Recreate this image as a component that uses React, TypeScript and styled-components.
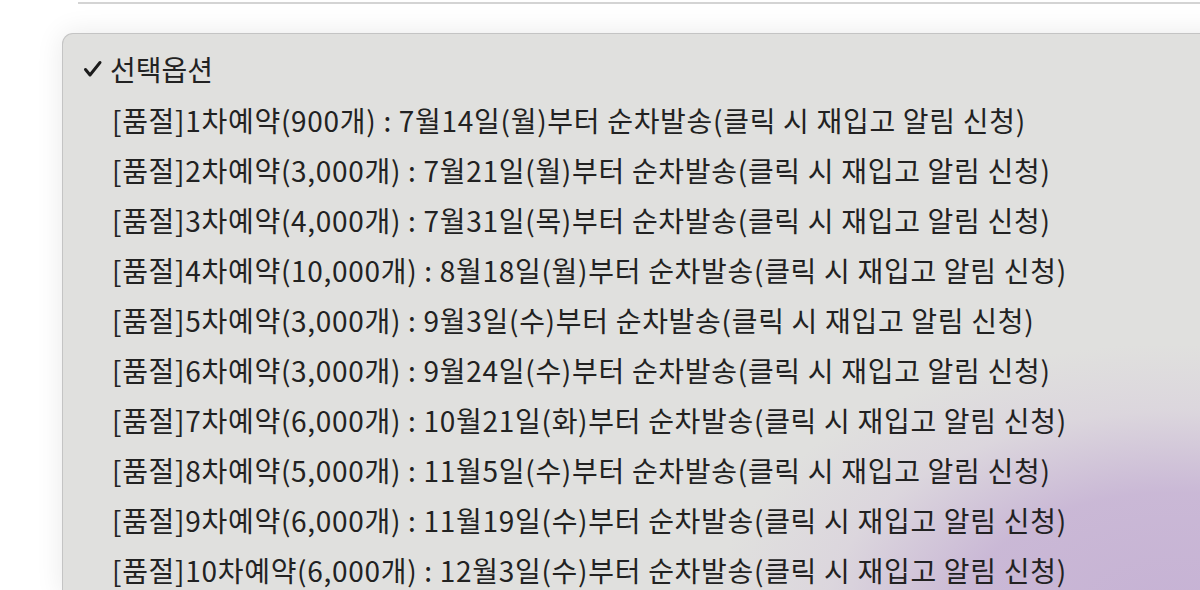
import React from 'react';
import styled, { createGlobalStyle } from 'styled-components';

interface Option {
    round: number,
    qty: string,
    date: string,
    day: string
}

const options: Option[] = [
    { round: 1, qty: '900', date: '7월14일', day: '월' },
    { round: 2, qty: '3,000', date: '7월21일', day: '월' },
    { round: 3, qty: '4,000', date: '7월31일', day: '목' },
    { round: 4, qty: '10,000', date: '8월18일', day: '월' },
    { round: 5, qty: '3,000', date: '9월3일', day: '수' },
    { round: 6, qty: '3,000', date: '9월24일', day: '수' },
    { round: 7, qty: '6,000', date: '10월21일', day: '화' },
    { round: 8, qty: '5,000', date: '11월5일', day: '수' },
    { round: 9, qty: '6,000', date: '11월19일', day: '수' },
    { round: 10, qty: '6,000', date: '12월3일', day: '수' },
];

const GlobalStyle = createGlobalStyle`
    html, body {
        margin: 0;
        padding: 0;
        background: #ffffff;
        overflow: hidden;
    }
    body {
        font-family: "Noto Sans CJK KR", "Noto Sans", sans-serif;
        color: #222222;
    }
`;

const App = () => {
    return (
        <Page>
            <GlobalStyle />
            <Divider />
            <Menu>
                <Selected>
                    <Check>
                        <svg width="22" height="22" viewBox="0 0 22 22">
                            <path d="M3.5 11.5 L8 17 L18 4.5" fill="none" stroke="#1c1c1c" strokeWidth="3" strokeLinecap="round" strokeLinejoin="round" />
                        </svg>
                    </Check>
                    선택옵션
                </Selected>
                {options.map(o => (
                    <Item key={o.round}>
                        [품절]{o.round}차예약({o.qty}개) : {o.date}({o.day})부터 순차발송(클릭 시 재입고 알림 신청)
                    </Item>
                ))}
            </Menu>
        </Page>
    );
};

export default App;

const Page = styled.div`
    width: 1200px;
    height: 590px;
    overflow: hidden;
    display: flex;
    flex-direction: column;
`;

const Divider = styled.div`
    flex: 0 0 2px;
    margin: 2px 0 0 78px;
    background: #d4d4d4;
`;

const Menu = styled.div`
    margin: 29px -40px 0 62px;
    flex: 1;
    padding: 22px 0 0 19px;
    border: 1px solid #c4c4c4;
    border-bottom: none;
    border-radius: 11px 11px 0 0;
    background:
        radial-gradient(ellipse 460px 270px at 1110px 580px, rgba(198, 178, 212, 1) 0%, rgba(200, 181, 213, 0.92) 45%, rgba(214, 202, 220, 0.45) 75%, rgba(224, 224, 222, 0) 100%),
        #e0e0de;
    box-shadow: 0 0 28px rgba(0, 0, 0, 0.09);
`;

const Selected = styled.div`
    display: flex;
    align-items: center;
    height: 26px;
    font-size: 28px;
    line-height: 26px;
    margin-bottom: 13px;
`;

const Check = styled.span`
    display: flex;
    width: 28px;
    align-items: center;
`;

const Item = styled.div`
    padding-left: 30px;
    height: 50px;
    font-size: 28px;
    line-height: 50px;
    letter-spacing: 0.7px;
    white-space: nowrap;
`;
